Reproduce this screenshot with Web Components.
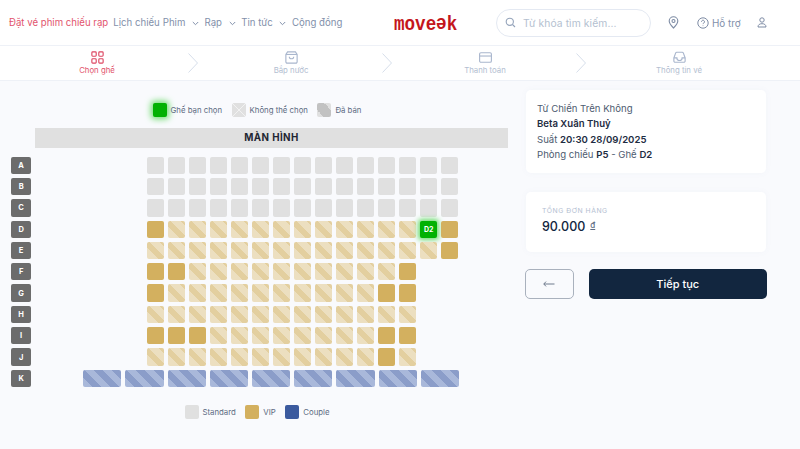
<!DOCTYPE html>
<html lang="vi">
<head>
<meta charset="utf-8">
<title>Moveek</title>
<style>
  html, body { margin: 0; height: 449px; overflow: hidden; background: #f9fafd; }
  body { font-family: Inter, "Noto Sans", sans-serif; color: #12263f; }
</style>
</head>
<body>
<app-header></app-header>
<step-bar>
  <step-item label="Chọn ghế" icon="seat" active arrow></step-item>
  <step-item label="Bắp nước" icon="bag" arrow></step-item>
  <step-item label="Thanh toán" icon="card" arrow></step-item>
  <step-item label="Thông tin vé" icon="inbox"></step-item>
</step-bar>
<booking-page>
  <seat-plan slot="left"></seat-plan>
  <order-panel slot="right"></order-panel>
</booking-page>

<script>
class AppHeader extends HTMLElement {
  constructor() {
    super();
    this.attachShadow({mode: 'open'}).innerHTML = `<style>
      :host { display: flex; align-items: center; height: 46px; box-sizing: border-box; background: #fff; border-bottom: 1px solid #eef1f7; padding-left: 9px; font-size: 9.650px; color: #8290aa; }
      nav { display: flex; align-items: center; width: 385px; flex: none; }
      a { white-space: nowrap; }
      a.red { color: #e2536d; margin-right: 5px; }
      a.item { margin-right: 3px; }
      .drop { display: flex; align-items: center; }
      .drop svg { margin: 1px 5.700px 0 6.500px; }
      .logo { width: 102px; flex: none; font: bold 17.6px "Liberation Mono", monospace; color: #c4161c; padding-top: 2px; transform: scaleY(1.15); transform-origin: 0 60%; }
      .flip { display: inline-block; transform: rotate(180deg); }
      .search { display: flex; align-items: center; gap: 7px; box-sizing: border-box; width: 155px; height: 28px; border: 1px solid #e4e9f2; border-radius: 14px; padding-left: 8px; color: #b4bfd0; font-size: 10.300px; letter-spacing: .1px; }
      .pin { margin-left: 16.500px; }
      .help { display: flex; align-items: center; gap: 3px; margin-left: 18.500px; font-size: 9.900px; }
      .user { margin-left: 16.500px; }
      svg { display: block; flex: none; }
    </style>
    <nav>
      <a class="red">Đặt vé phim chiếu rạp</a>
      <a class="item">Lịch chiếu</a>
      <a class="drop">Phim<svg width="7" height="5" viewBox="0 0 7 5" fill="none" stroke="#8290aa"><path d="M.8 1l2.7 2.7L6.2 1"/></svg></a>
      <a class="drop">Rạp<svg width="7" height="5" viewBox="0 0 7 5" fill="none" stroke="#8290aa"><path d="M.8 1l2.7 2.7L6.2 1"/></svg></a>
      <a class="drop">Tin tức<svg width="7" height="5" viewBox="0 0 7 5" fill="none" stroke="#8290aa"><path d="M.8 1l2.7 2.7L6.2 1"/></svg></a>
      <a>Cộng đồng</a>
    </nav>
    <div class="logo">move<span class="flip">e</span>k</div>
    <div class="search">
      <svg width="11" height="11" viewBox="0 0 11 11" fill="none" stroke="#94a3ba" stroke-width="1.1"><circle cx="4.8" cy="4.8" r="3.6"/><path d="M7.5 7.5L10 10"/></svg>
      <span>Từ khóa tìm kiếm...</span>
    </div>
    <svg class="pin" width="11" height="13" viewBox="0 0 11 13" fill="none" stroke="#7d8ba4" stroke-width="1.1"><path d="M5.5 12C3 9.6 1.2 7.5 1.2 5.1a4.3 4.3 0 0 1 8.6 0C9.800 7.500 8 9.600 5.500 12z"/><circle cx="5.500" cy="5" r="1.500"/></svg>
    <div class="help">
      <svg width="12" height="12" viewBox="0 0 12 12" fill="none" stroke="#7d8ba4" stroke-width="1"><circle cx="6" cy="6" r="5.200"/><path d="M4.500 4.700a1.500 1.500 0 1 1 2.300 1.300c-.5.300-.8.600-.8 1.100"/><path d="M6 8.500v.6"/></svg>
      <span>Hỗ trợ</span>
    </div>
    <svg class="user" width="10" height="11" viewBox="0 0 10 11" fill="none" stroke="#7d8ba4" stroke-width="1"><circle cx="5" cy="3" r="2.200"/><path d="M1 10c0-2.300 1.700-3.300 4-3.300S9 7.700 9 10z"/></svg>`;
  }
}

class StepBar extends HTMLElement {
  constructor() {
    super();
    this.attachShadow({mode: 'open'}).innerHTML = `<style>
      :host { display: flex; height: 35px; box-sizing: border-box; background: #fff; border-bottom: 1px solid #eef1f7; }
    </style><slot></slot>`;
  }
}

const stepIcons = {
  seat: '<rect x="1" y="1" width="5" height="5" rx="1"/><rect x="9" y="1" width="5" height="5" rx="1"/><rect x="1" y="9" width="5" height="5" rx="1"/><rect x="9" y="9" width="5" height="5" rx="1"/>',
  bag: '<path d="M3 1h9l2 3v8.500a1.500 1.500 0 0 1-1.500 1.500h-10A1.500 1.500 0 0 1 1 12.500V4z"/><path d="M1.200 4h12.600"/><path d="M5 6.500a2.500 2.500 0 0 0 5 0"/>',
  card: '<rect x=".7" y="2" width="13.600" height="11" rx="1.500"/><path d="M.7 5.800h13.600"/>',
  inbox: '<path d="M1 8l2-5.500A1.500 1.500 0 0 1 4.400 1.500h6.200A1.500 1.500 0 0 1 12 2.500L14 8v3.500a1.500 1.500 0 0 1-1.500 1.500h-10A1.500 1.500 0 0 1 1 11.500z"/><path d="M1 8h3.500a3 3 0 0 0 6 0H14"/>'
};

class StepItem extends HTMLElement {
  constructor() {
    super();
    const active = this.hasAttribute('active');
    const color = active ? '#dd4560' : '#a9b6cd';
    this.attachShadow({mode: 'open'}).innerHTML = `<style>
      :host { display: flex; align-items: center; }
      .step { width: 194px; display: flex; flex-direction: column; align-items: center; gap: 1px; color: ${active ? '#e2536d' : '#b3bed1'}; font-size: 7.8px; white-space: nowrap; }
      svg { display: block; }
      .arrow { margin: 0 -4px 0 -6px; }
    </style>
    <div class="step">
      <svg width="13" height="13" viewBox="0 0 15 15" fill="none" stroke="${color}" stroke-width="1.300">${stepIcons[this.getAttribute('icon')]}</svg>
      <span>${this.getAttribute('label')}</span>
    </div>
    ${this.hasAttribute('arrow') ? `<svg class="arrow" width="10" height="20" viewBox="0 0 10 20" fill="none" stroke="#d6deea"><path d="M.5 .5l9 9.500-9 9.500"/></svg>` : ''}`;
  }
}

class BookingPage extends HTMLElement {
  constructor() {
    super();
    this.attachShadow({mode: 'open'}).innerHTML = `<style>
      :host { display: flex; }
      .left { width: 514px; flex: none; }
      .right { width: 241px; flex: none; margin-left: 12px; }
    </style>
    <div class="left"><slot name="left"></slot></div>
    <div class="right"><slot name="right"></slot></div>`;
  }
}

class LegendItem extends HTMLElement {
  constructor() {
    super();
    const stripe = {
      picked: 'background: #02b102; box-shadow: 0 0 6px 2px #6ddc6d;',
      blocked: 'background: linear-gradient(45deg, transparent 47%, #f2f2f2 47%, #f2f2f2 53%, transparent 53%), linear-gradient(-45deg, transparent 47%, #f2f2f2 47%, #f2f2f2 53%, transparent 53%), #e0e0e0;',
      sold: 'background: linear-gradient(45deg, #e0e0e0 25%, #c2c2c2 25%, #c2c2c2 75%, #e0e0e0 75%);',
      standard: 'background: #e0e0e0;',
      vip: 'background: #d3b05f;',
      couple: 'background: #3b5a9e;'
    }[this.getAttribute('kind')];
    this.attachShadow({mode: 'open'}).innerHTML = `<style>
      :host { display: flex; align-items: center; gap: 4px; font-size: 7.800px; color: #5d6b82; white-space: nowrap; }
      i { width: 14px; height: 14px; border-radius: 2px; ${stripe} }
    </style><i></i><slot></slot>`;
  }
}

class SeatLegend extends HTMLElement {
  constructor() {
    super();
    this.attachShadow({mode: 'open'}).innerHTML = `<style>
      :host { display: flex; justify-content: center; gap: var(--legend-gap, 9.500px); }
    </style><slot></slot>`;
  }
}

class SeatCell extends HTMLElement {
  constructor() {
    super();
    this.attachShadow({mode: 'open'}).innerHTML = `<style>
      :host { display: flex; align-items: center; justify-content: center; width: 17px; height: 17.300px; border-radius: 2px; font-size: 7px; font-weight: 700; color: #fff; background: #e0e0e0; flex: none; }
      :host([kind="vip"]) { background: #d3b05f; }
      :host([kind="held"]) { background: linear-gradient(45deg, #ecdfc0 0 8px, #e3cf9f 8px 14px, #ecdfc0 14px 21px, #e3cf9f 21px 27px); }
      :host([kind="picked"]) { background: #02b102; box-shadow: 0 0 5px 2px #6ddc6d; }
      :host([kind="couple"]) { width: 38.200px; background: repeating-linear-gradient(45deg, #a9b8da 0 6.500px, #8b9dc9 6.500px 13px); }
    </style><slot></slot>`;
  }
}

class SeatRow extends HTMLElement {
  constructor() {
    super();
    this.attachShadow({mode: 'open'}).innerHTML = `<style>
      :host { display: flex; align-items: center; height: 17.300px; }
      .name { width: 20.300px; height: 17.300px; border-radius: 2px; background: #6c6c6c; color: #fff; font-size: 7.500px; font-weight: 700; display: flex; align-items: center; justify-content: center; flex: none; }
      .seats { display: flex; gap: var(--gap); margin-left: var(--offset); }
    </style>
    <div class="name">${this.getAttribute('name')}</div>
    <div class="seats"><slot></slot></div>`;
  }
}

// hàng ghế: s = thường, v = vip trống, h = vip đã giữ, p = đang chọn, c = ghế đôi
const seatRows = [
  ['A', 'sssssssssssssss'],
  ['B', 'sssssssssssssss'],
  ['C', 'sssssssssssssss'],
  ['D', 'vhhhhhhhhhhhhpv'],
  ['E', 'hhhhhhhhhhhhhhv'],
  ['F', 'vvhhhhhhhhhhv'],
  ['G', 'vhhhhhhhhhhvv'],
  ['H', 'hhhhhhhhhhhhh'],
  ['I', 'vvvhhhhhhhhvv'],
  ['J', 'hhhhhhhhhhhvh'],
  ['K', 'ccccccccc']
];
const seatKinds = {s: 'standard', v: 'vip', h: 'held', p: 'picked', c: 'couple'};

class SeatPlan extends HTMLElement {
  constructor() {
    super();
    const rows = seatRows.map(([name, seats]) => {
      const cells = [...seats].map(k => `<seat-cell kind="${seatKinds[k]}">${k == 'p' ? 'D2' : ''}</seat-cell>`).join('');
      return `<seat-row name="${name}" style="--offset:${name == 'K' ? 52 : 115.700}px;--gap:${name == 'K' ? 4 : 4.030}px">${cells}</seat-row>`;
    }).join('');
    this.attachShadow({mode: 'open'}).innerHTML = `<style>
      :host { display: block; padding-top: 22px; }
      .screen { margin: 10.500px 0 9.200px 35px; width: 473px; height: 20px; background: #e0e0e0; color: #1f2733; font-size: 9.800px; font-weight: 700; letter-spacing: .4px; display: flex; align-items: center; justify-content: center; }
      .rows { display: flex; flex-direction: column; gap: 4px; padding-left: 11px; }
      .bottom { margin-top: 18px; }
    </style>
    <seat-legend>
      <legend-item kind="picked">Ghế bạn chọn</legend-item>
      <legend-item kind="blocked">Không thể chọn</legend-item>
      <legend-item kind="sold">Đã bán</legend-item>
    </seat-legend>
    <div class="screen">MÀN HÌNH</div>
    <div class="rows">${rows}</div>
    <seat-legend class="bottom">
      <legend-item kind="standard">Standard</legend-item>
      <legend-item kind="vip">VIP</legend-item>
      <legend-item kind="couple">Couple</legend-item>
    </seat-legend>`;
  }
}

class OrderPanel extends HTMLElement {
  constructor() {
    super();
    this.attachShadow({mode: 'open'}).innerHTML = `<style>
      :host { display: flex; flex-direction: column; padding-top: 9px; }
      .card { background: #fff; border-radius: 5px; box-shadow: 0 0 6px rgba(120,140,170,.05); box-sizing: border-box; width: 240px; }
      .info { height: 83px; padding: 11px 11px; font-size: 9.600px; line-height: 15.400px; color: #4d5b70; }
      .info b { color: #1d2c42; font-weight: 600; }
      .total { height: 60px; margin-top: 19px; padding: 14px 16px; }
      .total small { display: block; font-size: 6.800px; letter-spacing: .55px; color: #b3bed1; line-height: 9px; }
      .price { display: flex; gap: 5px; font-size: 12.500px; font-weight: 500; color: #12263f; line-height: 18px; margin-top: 3px; }
      .price u { font-size: 8px; line-height: 14px; color: #5d6b82; }
      .actions { display: flex; gap: 15.500px; margin-top: 16.500px; margin-left: -1px; }
      .back { display: flex; align-items: center; justify-content: center; box-sizing: border-box; width: 48.500px; height: 30px; border: 1px solid #a9b1bd; border-radius: 5px; }
      .next { display: flex; align-items: center; justify-content: center; width: 177.500px; height: 30px; border-radius: 5px; background: #12263f; color: #fff; font-size: 11px; font-weight: 500; }
    </style>
    <div class="card info">
      <div>Từ Chiến Trên Không</div>
      <div><b>Beta Xuân Thuỷ</b></div>
      <div>Suất <b>20:30 28/09/2025</b></div>
      <div>Phòng chiếu <b>P5</b> - Ghế <b>D2</b></div>
    </div>
    <div class="card total">
      <small>TỔNG ĐƠN HÀNG</small>
      <div class="price"><span>90.000</span><u>đ</u></div>
    </div>
    <div class="actions">
      <div class="back"><svg width="12" height="6" viewBox="0 0 12 6" fill="none" stroke="#6f7b8d"><path d="M11.500 3H.8M3 .6L.8 3 3 5.400"/></svg></div>
      <div class="next">Tiếp tục</div>
    </div>`;
  }
}

customElements.define('app-header', AppHeader);
customElements.define('step-bar', StepBar);
customElements.define('step-item', StepItem);
customElements.define('booking-page', BookingPage);
customElements.define('legend-item', LegendItem);
customElements.define('seat-legend', SeatLegend);
customElements.define('seat-cell', SeatCell);
customElements.define('seat-row', SeatRow);
customElements.define('seat-plan', SeatPlan);
customElements.define('order-panel', OrderPanel);
</script>
</body>
</html>
